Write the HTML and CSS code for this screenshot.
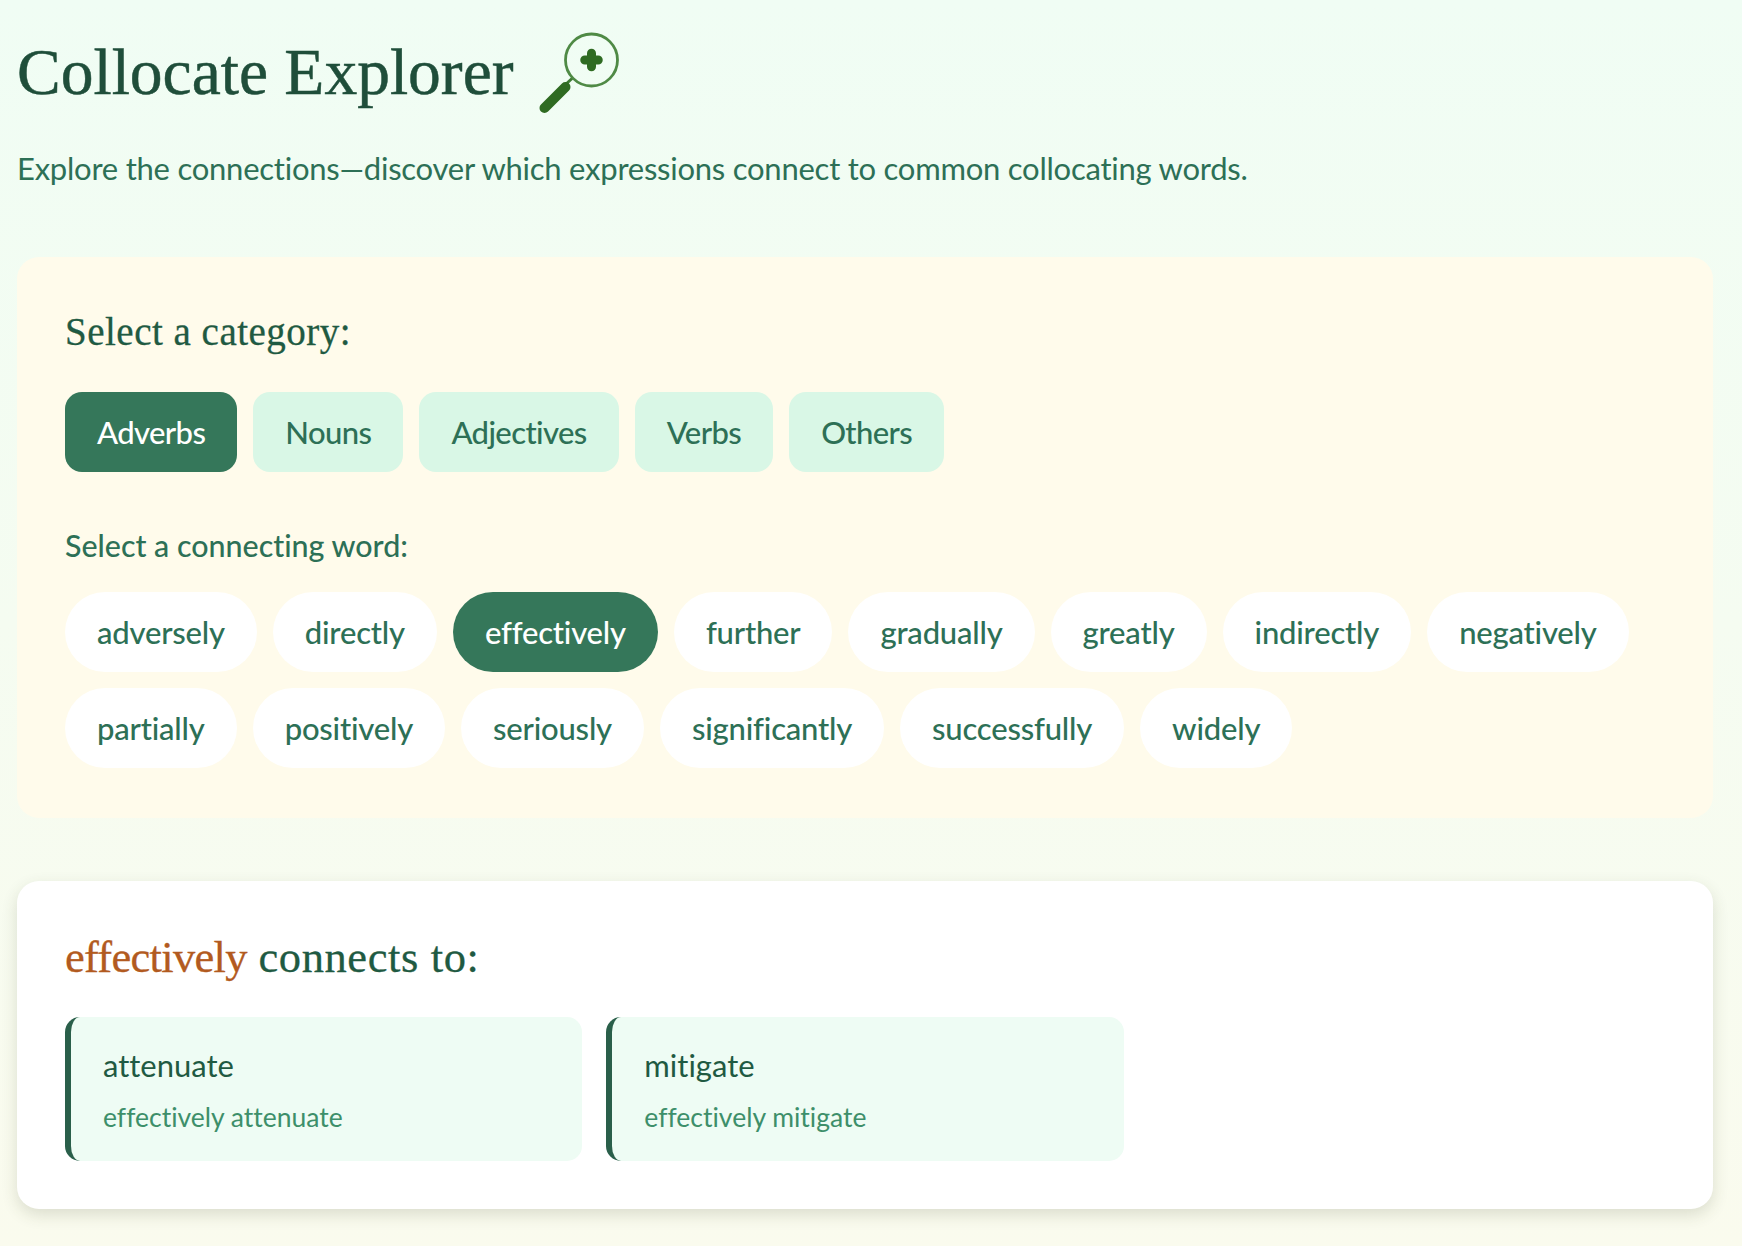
FILE: index.html
```html
<!DOCTYPE html>
<html lang="en">
<head>
<meta charset="utf-8">
<title>Collocate Explorer</title>
<link rel="stylesheet" href="styles.css">
</head>
<body>
<header class="page-head">
  <h1 class="title"><span>Collocate Explorer</span>
    <svg class="title-icon" viewBox="0 0 82 82" aria-hidden="true">
      <circle cx="53.5" cy="29" r="26" fill="none" stroke="#4f8a45" stroke-width="2.8"/>
      <path d="M53.5 22.25v13.5M46.75 29h13.5" stroke="#2f6b22" stroke-width="9" stroke-linecap="round"/>
      <path d="M34 47.5 27 54" stroke="#3d7a32" stroke-width="3"/>
      <path d="M27.5 56 6.5 77" stroke="#2f6b22" stroke-width="10" stroke-linecap="round"/>
    </svg>
  </h1>
  <p class="subtitle">Explore the connections—discover which expressions connect to common collocating words.</p>
</header>
<section class="panel panel-select">
  <h2 class="panel-heading">Select a category:</h2>
  <div class="tabs">
    <button class="tab is-active">Adverbs</button>
    <button class="tab">Nouns</button>
    <button class="tab">Adjectives</button>
    <button class="tab">Verbs</button>
    <button class="tab">Others</button>
  </div>
  <h3 class="word-label">Select a connecting word:</h3>
  <div class="pills">
    <button class="pill">adversely</button>
    <button class="pill">directly</button>
    <button class="pill is-active">effectively</button>
    <button class="pill">further</button>
    <button class="pill">gradually</button>
    <button class="pill">greatly</button>
    <button class="pill">indirectly</button>
    <button class="pill">negatively</button>
    <button class="pill">partially</button>
    <button class="pill">positively</button>
    <button class="pill">seriously</button>
    <button class="pill">significantly</button>
    <button class="pill">successfully</button>
    <button class="pill">widely</button>
  </div>
</section>
<section class="panel panel-results">
  <h2 class="results-heading"><span class="accent">effectively</span> connects to:</h2>
  <div class="cards">
    <article class="card"><div class="card-word">attenuate</div><div class="card-phrase">effectively attenuate</div></article>
    <article class="card"><div class="card-word">mitigate</div><div class="card-phrase">effectively mitigate</div></article>
  </div>
</section>
</body>
</html>
```
FILE: styles.css
```css
* { box-sizing: border-box; }
html { height: 100%; }
body {
  margin: 0;
  min-height: 100%;
  padding: 0 29px 37px 17px;
  background: linear-gradient(180deg, #f0fdf4 0%, #fafbee 100%);
  font-family: "Lato", "Noto Sans", sans-serif;
  font-variant-ligatures: none;
  color: #2d7056;
}
.page-head { height: 257px; padding-top: 32px; }
.title {
  margin: 0;
  height: 80px;
  display: flex;
  align-items: center;
  gap: 24px;
  font-family: "Liberation Serif", serif;
  font-weight: 400;
  font-size: 65.5px;
  -webkit-text-stroke: 0.5px #1f4e3a;
  color: #1f4e3a;
}
.title-icon { width: 82px; height: 82px; flex: none; }
.subtitle { margin: 39px 0 0; font-size: 31px; letter-spacing: -0.24px; line-height: 35px; color: #2d7056; }
.panel { border-radius: 22px; padding: 48px; }
.panel-select { background: #fffbeb; height: 561px; padding-top: 50px; }
.panel-heading {
  margin: 0;
  font-family: "Liberation Serif", serif;
  font-weight: 400;
  font-size: 39px;
  letter-spacing: 0.5px;
  line-height: 50px;
  -webkit-text-stroke: 0.3px #1f5a42;
  color: #1f5a42;
}
.tabs { display: flex; gap: 16px; margin-top: 35px; }
.tab, .pill {
  border: 0;
  height: 80px;
  font-family: inherit;
  font-size: 31px;
  font-weight: 500;
  font-variant-ligatures: none;
  color: #2d7056;
  padding: 0 32px;
}
.tab { background: #d9f7e6; border-radius: 17px; letter-spacing: -0.6px; }
.pill { background: #fff; border-radius: 40px; letter-spacing: -0.2px; }
.tab.is-active, .pill.is-active { background: #35775a; color: #fff; }
.word-label { margin: 55px 0 0; font-weight: 500; font-size: 30.4px; line-height: 36px; color: #2d7056; }
.pills { display: flex; flex-wrap: wrap; gap: 16px; margin-top: 29px; }
.panel-results {
  margin-top: 63px;
  height: 328px;
  background: #fff;
  box-shadow: 0 6px 16px rgba(60, 70, 40, 0.16);
  padding-top: 49px;
}
.results-heading {
  margin: 0;
  font-family: "Liberation Serif", serif;
  font-weight: 400;
  font-size: 44.5px;
  letter-spacing: 0.6px;
  line-height: 54px;
  -webkit-text-stroke: 0.3px currentColor;
  color: #1f5a42;
}
.accent { color: #b25a20; letter-spacing: -0.7px; }
.cards { display: grid; grid-template-columns: repeat(3, 1fr); gap: 24px; margin-top: 33px; }
.card {
  height: 144px;
  background: #eefcf4;
  border-left: 6px solid #2a5f4a;
  border-radius: 15px;
  padding: 30px 32px 0;
}
.card-word { font-size: 31px; line-height: 36px; color: #1f5a42; }
.card-phrase { margin-top: 18px; font-size: 26.5px; line-height: 32px; color: #3d8f6a; }
```
